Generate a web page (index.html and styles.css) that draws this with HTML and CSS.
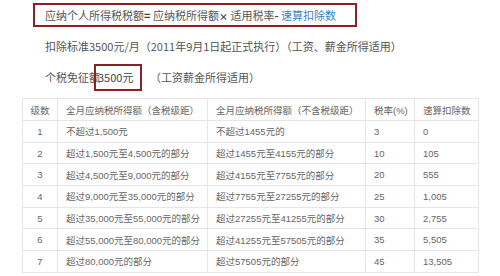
FILE: index.html
```html
<!DOCTYPE html>
<html lang="zh-CN">
<head>
<meta charset="utf-8">
<title>个人所得税税率表</title>
<link rel="stylesheet" href="styles.css">
</head>
<body>
<div class="formula">应纳个人所得税税额<b class="op">=</b> 应纳税所得额<b class="op times">×</b> 适用税率<b class="op">-</b> <a class="link" href="#">速算扣除数</a></div>
<p class="line">扣除标准3500元/月（2011年9月1日起正式执行）（工资、薪金所得适用）</p>
<p class="line">个税免征额<span class="hl">3500元</span> （工资薪金所得适用）</p>
<table class="rates">
  <colgroup>
    <col class="c1"><col class="c2"><col class="c3"><col class="c4"><col class="c5">
  </colgroup>
  <thead>
    <tr><th class="center">级数</th><th>全月应纳税所得额（含税级距）</th><th>全月应纳税所得额（不含税级距）</th><th>税率(%)</th><th>速算扣除数</th></tr>
  </thead>
  <tbody>
    <tr><td class="center">1</td><td>不超过1,500元</td><td>不超过1455元的</td><td>3</td><td>0</td></tr>
    <tr><td class="center">2</td><td>超过1,500元至4,500元的部分</td><td>超过1455元至4155元的部分</td><td>10</td><td>105</td></tr>
    <tr><td class="center">3</td><td>超过4,500元至9,000元的部分</td><td>超过4155元至7755元的部分</td><td>20</td><td>555</td></tr>
    <tr><td class="center">4</td><td>超过9,000元至35,000元的部分</td><td>超过7755元至27255元的部分</td><td>25</td><td>1,005</td></tr>
    <tr><td class="center">5</td><td>超过35,000元至55,000元的部分</td><td>超过27255元至41255元的部分</td><td>30</td><td>2,755</td></tr>
    <tr><td class="center">6</td><td>超过55,000元至80,000元的部分</td><td>超过41255元至57505元的部分</td><td>35</td><td>5,505</td></tr>
    <tr><td class="center">7</td><td>超过80,000元的部分</td><td>超过57505元的部分</td><td>45</td><td>13,505</td></tr>
  </tbody>
</table>
</body>
</html>
```

FILE: styles.css
```css
html, body {
  margin: 0;
  padding: 0;
  background: #ffffff;
}
body {
  font-family: "Noto Sans CJK SC", "Liberation Sans", sans-serif;
  font-size: 11px;
  color: #555555;
}
.formula {
  box-sizing: border-box;
  margin: 3px 0 0 33px;
  width: 324px;
  height: 24px;
  line-height: 20px;
  padding-left: 10px;
  border: 2px solid #8e1f24;
  color: #555555;
  white-space: nowrap;
}
.op {
  font-weight: bold;
  color: #444444;
}
.times {
  font-size: 9px;
}
.link {
  color: #3a7fc6;
  text-decoration: none;
}
.line {
  margin: 0;
  height: 31px;
  line-height: 31px;
  padding-left: 45px;
  white-space: nowrap;
}
.formula + .line {
  margin-top: 4px;
}
.hl {
  display: inline-block;
  line-height: 23px;
  border: 2px solid #8e1f24;
  padding: 0 7px 0 2px;
  margin-left: -6px;
  margin-right: 5px;
  color: #444444;
}
.rates {
  margin: 5px 0 0 22px;
  border-collapse: collapse;
  table-layout: fixed;
  width: 457px;
  font-family: "Liberation Sans", "Noto Sans CJK SC", sans-serif;
  font-size: 9.5px;
  color: #666666;
}
.c1 { width: 35px; }
.c2 { width: 150px; }
.c3 { width: 158px; }
.c4 { width: 49px; }
.c5 { width: 64px; }
.rates th,
.rates td {
  border: 1px solid #e6e6e6;
  padding: 0 0 0 8px;
  text-align: left;
  font-weight: normal;
  white-space: nowrap;
}
.rates thead tr { height: 22px; }
.rates tbody tr { height: 21.7px; }
.rates .center {
  text-align: center;
  padding: 0;
}
```
